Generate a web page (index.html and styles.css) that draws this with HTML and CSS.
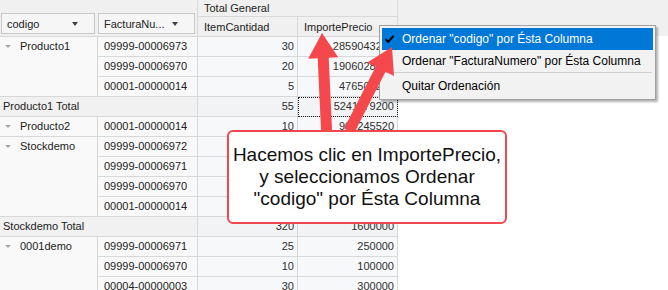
FILE: index.html
```html
<!DOCTYPE html>
<html lang="es">
<head>
    <meta charset="UTF-8">
    <meta name="viewport" content="width=device-width, initial-scale=1.0">
    <title>Pivot Grid - Ordenar por columna</title>
    <link rel="stylesheet" href="styles.css">
</head>
<body>
    <div class="screen">
        <div class="grid">
            <!-- header area -->
            <div class="fields">
                <div class="field f-codigo">codigo<span class="tri"></span></div>
                <div class="field f-factura">FacturaNu...<span class="tri"></span></div>
            </div>
            <div class="hcell total-general">Total General</div>
            <div class="hcell">ItemCantidad</div>
            <div class="hcell">ImportePrecio<span class="tri"></span></div>

            <!-- Producto1 -->
            <div class="rh span3"><span class="exp"></span>Producto1</div>
            <div class="rv">09999-00006973</div><div class="num">30</div><div class="num">2859043200</div>
            <div class="rv">09999-00006970</div><div class="num">20</div><div class="num">1906028800</div>
            <div class="rv">00001-00000014</div><div class="num">5</div><div class="num">476507200</div>
            <div class="tot">Producto1 Total</div><div class="num tnum">55</div><div class="num tnum focus">5241179200</div>

            <!-- Producto2 -->
            <div class="rh"><span class="exp"></span>Producto2</div>
            <div class="rv">00001-00000014</div><div class="num">10</div><div class="num">904245520</div>

            <!-- Stockdemo (values sit under the callout) -->
            <div class="rh span4"><span class="exp"></span>Stockdemo</div>
            <div class="rv">09999-00006972</div><div class="num"></div><div class="num"></div>
            <div class="rv">09999-00006971</div><div class="num"></div><div class="num"></div>
            <div class="rv">09999-00006970</div><div class="num"></div><div class="num"></div>
            <div class="rv">00001-00000014</div><div class="num"></div><div class="num"></div>
            <div class="tot">Stockdemo Total</div><div class="num tnum">320</div><div class="num tnum">1600000</div>

            <!-- 0001demo -->
            <div class="rh span3"><span class="exp"></span>0001demo</div>
            <div class="rv">09999-00006971</div><div class="num">25</div><div class="num">250000</div>
            <div class="rv">09999-00006970</div><div class="num">10</div><div class="num">100000</div>
            <div class="rv">00004-00000003</div><div class="num">30</div><div class="num">300000</div>
        </div>
        <div class="rest">
            <div class="rest-head"></div>
        </div>

        <!-- context menu -->
        <div class="menu">
            <div class="item active">
                <svg class="check" width="9" height="8" viewBox="0 0 9 8"><path d="M0.5 4.2 L3.2 7 L8.5 0.8" fill="none" stroke="#000" stroke-width="2"/></svg>
                Ordenar "codigo" por Ésta Columna
            </div>
            <div class="item">Ordenar "FacturaNumero" por Ésta Columna</div>
            <div class="sep"></div>
            <div class="item">Quitar Ordenación</div>
        </div>

        <svg class="arrows" width="668" height="290" viewBox="0 0 668 290">
            <polygon fill="#f4484d" points="322,33 338.2,57.3 328.7,57.7 332.5,139.7 321.5,140.3 317.7,58.2 308.2,58.7"/>
            <polygon fill="#f4484d" points="392,47 394,76 385.5,71.8 353.9,133.5 344.1,128.5 375.7,66.8 367.3,62.4"/>
        </svg>

        <div class="callout">
            Hacemos clic en ImportePrecio,<br>
            y seleccionamos Ordenar<br>
            "codigo" por Ésta Columna
        </div>
    </div>
</body>
</html>
```

FILE: styles.css
```css
body {
    margin: 0;
    background: #fff;
    font-family: "Liberation Sans", Arial, sans-serif;
    font-size: 11px;
    color: #303030;
}
.screen {
    position: relative;
    display: flex;
    width: 668px;
    height: 290px;
    overflow: hidden;
}

/* pivot grid */
.grid {
    display: grid;
    grid-template-columns: 98px 100px 100px 100px;
    grid-template-rows: 17px 20px;
    grid-auto-rows: 20px;
    width: 398px;
    flex: none;
    align-content: start;
}
.grid > div {
    box-sizing: border-box;
    border-right: 1px solid #d8d8d8;
    border-bottom: 1px solid #d8d8d8;
    white-space: nowrap;
    overflow: hidden;
}
.fields {
    grid-row: 1 / 3;
    grid-column: 1 / 3;
    display: flex;
    align-items: flex-end;
    gap: 3px;
    padding: 0 0 2px 1px;
    background: #f0f0f0;
}
.field {
    box-sizing: border-box;
    display: flex;
    align-items: center;
    justify-content: space-between;
    height: 21px;
    padding: 0 16px 0 5px;
    border: 1px solid #c8c8c8;
    background: #f6f6f6;
    color: #222;
}
.f-codigo { width: 94px; }
.f-factura { width: 97px; }
.tri {
    width: 0;
    height: 0;
    border: 3px solid transparent;
    border-bottom: 0;
    border-top: 4px solid #404040;
}
.hcell {
    display: flex;
    align-items: center;
    padding: 0 5px 0 6px;
    background: #f0f0f0;
    color: #222;
}
.hcell .tri {
    margin-left: auto;
}
.total-general {
    grid-column: 3 / 5;
}
.rh {
    display: flex;
    align-items: flex-start;
    padding-left: 5px;
    line-height: 19px;
    background: #f9f9f9;
    color: #222;
}
.span3 { grid-row: span 3; }
.span4 { grid-row: span 4; }
.exp {
    width: 0;
    height: 0;
    margin: 8px 9px 0 0;
    border: 3px solid transparent;
    border-bottom: 0;
    border-top: 3px solid #a8a8a8;
}
.rv {
    padding-left: 6px;
    line-height: 19px;
    background: #f9f9f9;
    color: #222;
}
.num {
    padding-right: 3px;
    text-align: right;
    line-height: 19px;
    background: #f7f8fa;
}
.tot {
    grid-column: span 2;
    padding-left: 3px;
    line-height: 19px;
    background: #f1f1f1;
    color: #222;
}
.tnum {
    background: #f2f3f5;
}
.focus {
    outline: 1px dotted #222;
    outline-offset: -1px;
}
.rest {
    flex: 1;
}
.rest-head {
    height: 36px;
    background: #f0f0f0;
}

/* context menu */
.menu {
    position: absolute;
    left: 379px;
    top: 25px;
    width: 277px;
    box-sizing: border-box;
    padding: 2px;
    border: 1px solid #a0a0a0;
    background: #f2f2f2;
    box-shadow: 2px 2px 2px rgba(0, 0, 0, 0.3);
    font-size: 12px;
    color: #000;
}
.item {
    position: relative;
    display: flex;
    align-items: center;
    height: 22px;
    padding-left: 20px;
    white-space: nowrap;
}
.item.active {
    background: #0078d7;
    color: #fff;
}
.check {
    position: absolute;
    left: 3px;
    top: 7px;
}
.sep {
    height: 1px;
    margin: 0 1px 2px;
    background: #cfcfcf;
}

/* annotation */
.arrows {
    position: absolute;
    left: 0;
    top: 0;
}
.callout {
    position: absolute;
    left: 227px;
    top: 130px;
    width: 280px;
    height: 94px;
    box-sizing: border-box;
    display: flex;
    align-items: center;
    justify-content: center;
    text-align: center;
    border: 2px solid #f0484c;
    border-radius: 6px;
    background: #fff;
    font-family: "Liberation Sans", Arial, sans-serif;
    font-size: 19px;
    line-height: 22px;
    color: #111;
}
```
